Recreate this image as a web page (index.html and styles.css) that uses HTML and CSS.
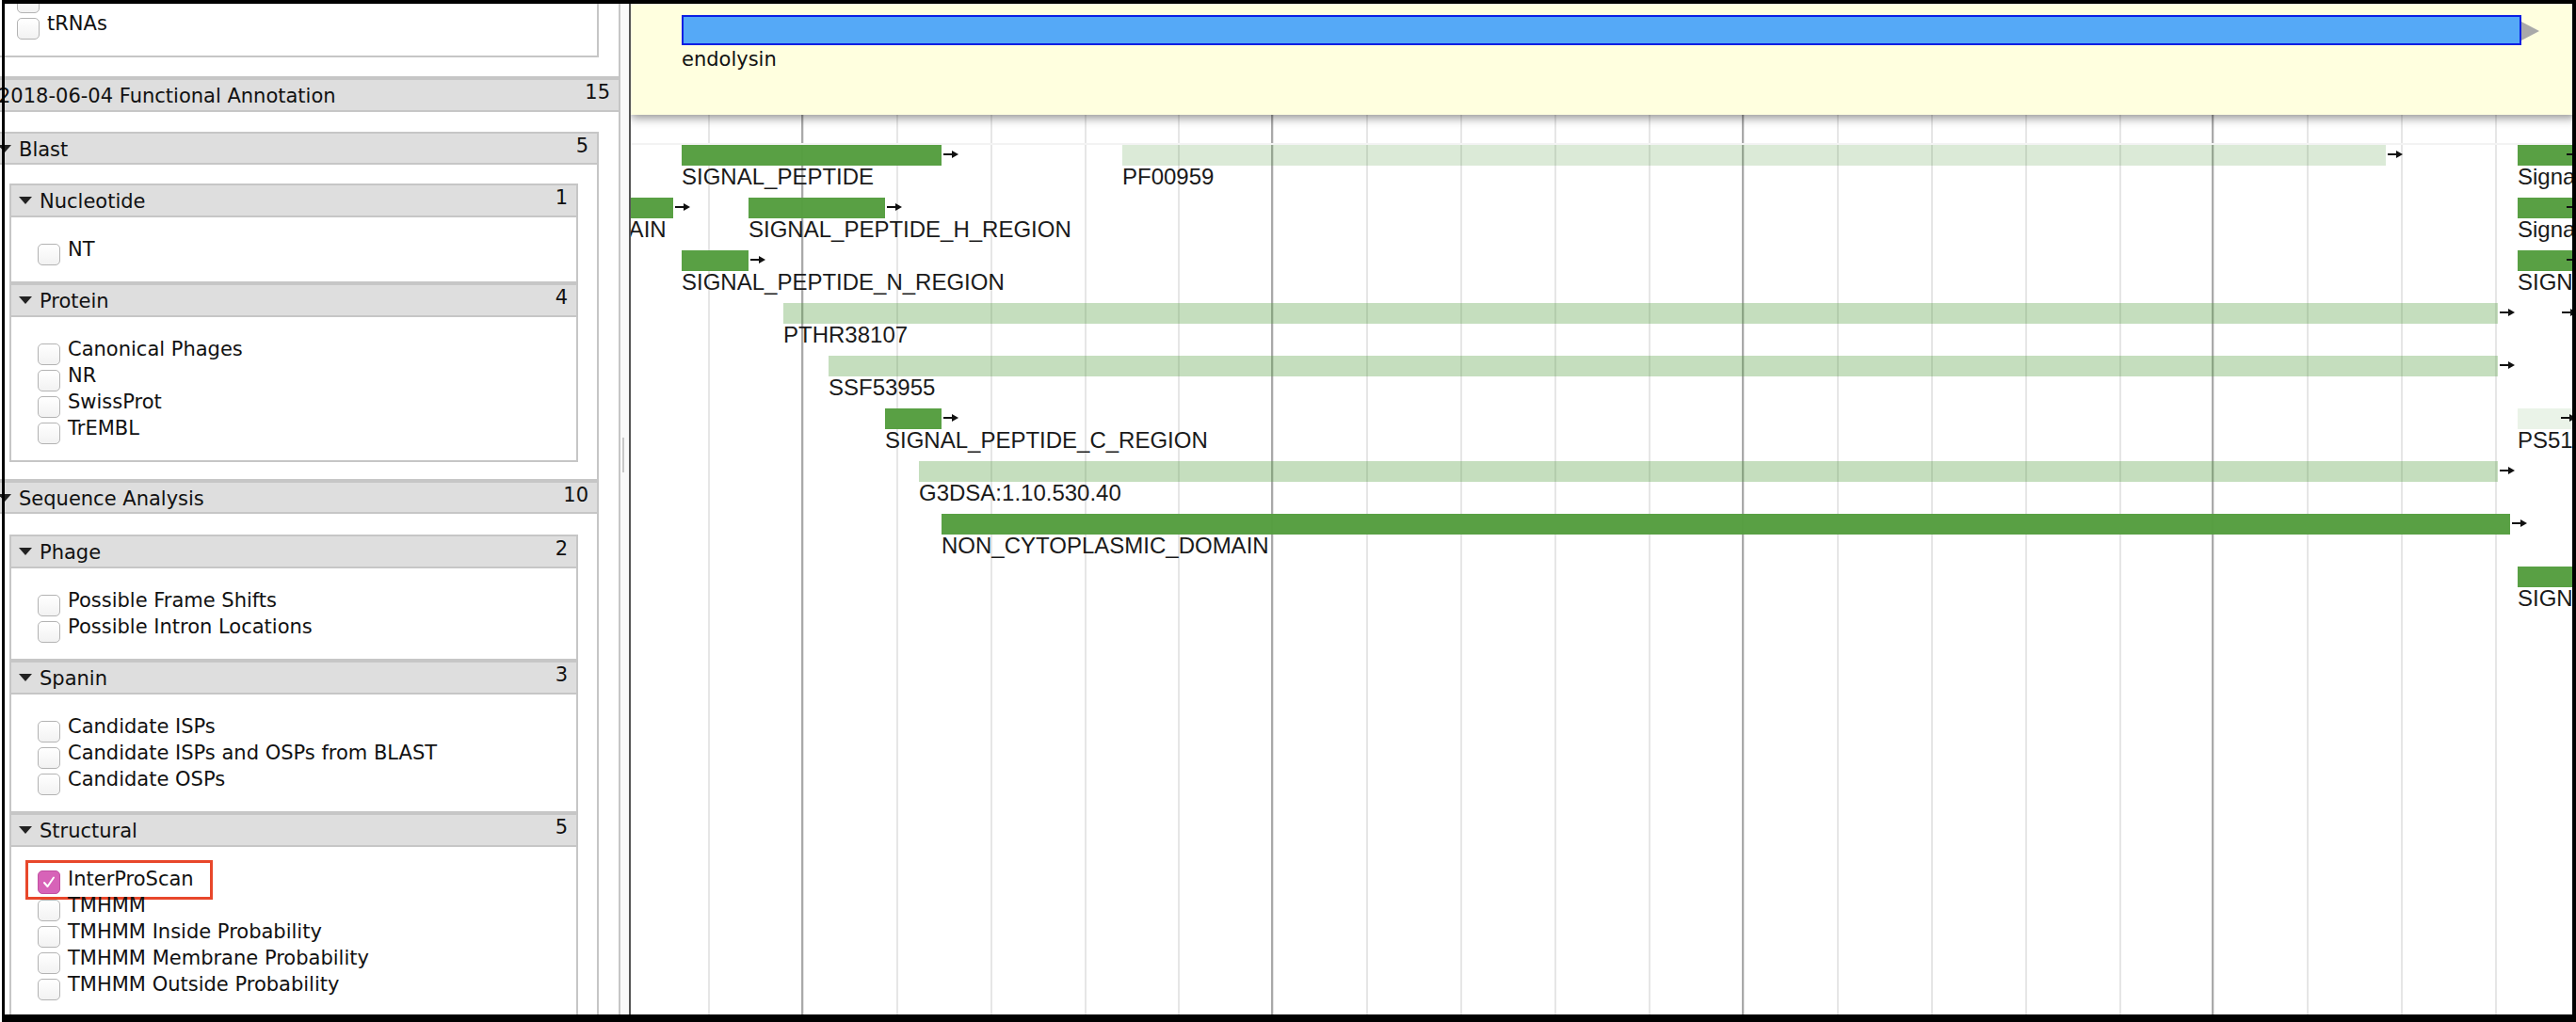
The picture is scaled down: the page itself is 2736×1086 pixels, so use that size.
FILE: index.html
```html
<!DOCTYPE html>
<html>
<head>
<meta charset="utf-8">
<title>JBrowse</title>
<link rel="stylesheet" href="styles.css">
</head>
<body>
<div class="app">
  <aside class="sidebar">
    <div class="scroll">
      <div class="section l0 cut">
        <div class="body b0 cut-body">
          <div class="section l1 cut">
            <div class="body list">
              <label class="item"><span class="cb"></span><span class="txt">Terminators</span></label>
              <label class="item"><span class="cb"></span><span class="txt">tRNAs</span></label>
            </div>
          </div>
        </div>
      </div>

      <div class="section l0">
        <div class="hdr"><span class="tri"></span><span class="title">2018-06-04 Functional Annotation</span><span class="count">15</span></div>
        <div class="body b0">
          <div class="section l1">
            <div class="hdr"><span class="tri"></span><span class="title">Blast</span><span class="count">5</span></div>
            <div class="body b1 first">
              <div class="section l2">
                <div class="hdr"><span class="tri"></span><span class="title">Nucleotide</span><span class="count">1</span></div>
                <div class="body list">
                  <label class="item"><span class="cb"></span><span class="txt">NT</span></label>
                </div>
              </div>
              <div class="section l2">
                <div class="hdr"><span class="tri"></span><span class="title">Protein</span><span class="count">4</span></div>
                <div class="body list">
                  <label class="item"><span class="cb"></span><span class="txt">Canonical Phages</span></label>
                  <label class="item"><span class="cb"></span><span class="txt">NR</span></label>
                  <label class="item"><span class="cb"></span><span class="txt">SwissProt</span></label>
                  <label class="item"><span class="cb"></span><span class="txt">TrEMBL</span></label>
                </div>
              </div>
            </div>
          </div>
          <div class="section l1">
            <div class="hdr"><span class="tri"></span><span class="title">Sequence Analysis</span><span class="count">10</span></div>
            <div class="body b1 second">
              <div class="section l2">
                <div class="hdr"><span class="tri"></span><span class="title">Phage</span><span class="count">2</span></div>
                <div class="body list">
                  <label class="item"><span class="cb"></span><span class="txt">Possible Frame Shifts</span></label>
                  <label class="item"><span class="cb"></span><span class="txt">Possible Intron Locations</span></label>
                </div>
              </div>
              <div class="section l2">
                <div class="hdr"><span class="tri"></span><span class="title">Spanin</span><span class="count">3</span></div>
                <div class="body list">
                  <label class="item"><span class="cb"></span><span class="txt">Candidate ISPs</span></label>
                  <label class="item"><span class="cb"></span><span class="txt">Candidate ISPs and OSPs from BLAST</span></label>
                  <label class="item"><span class="cb"></span><span class="txt">Candidate OSPs</span></label>
                </div>
              </div>
              <div class="section l2">
                <div class="hdr"><span class="tri"></span><span class="title">Structural</span><span class="count">5</span></div>
                <div class="body list">
                  <label class="item highlighted"><span class="cb checked"><svg viewBox="0 0 24 23" width="24" height="23"><path d="M7 12 L10.5 16 L17 6.5" fill="none" stroke="#fff" stroke-width="2" stroke-linecap="round" stroke-linejoin="round"/></svg></span><span class="txt">InterProScan</span><span class="hl-box"></span></label>
                  <label class="item"><span class="cb"></span><span class="txt">TMHMM</span></label>
                  <label class="item"><span class="cb"></span><span class="txt">TMHMM Inside Probability</span></label>
                  <label class="item"><span class="cb"></span><span class="txt">TMHMM Membrane Probability</span></label>
                  <label class="item"><span class="cb"></span><span class="txt">TMHMM Outside Probability</span></label>
                </div>
              </div>
            </div>
          </div>
        </div>
      </div>
    </div>
  </aside>

  <div class="splitter"><span class="handle"></span></div>

  <main class="tracks">
    <div class="pinned">
      <div class="gene-row">
        <div class="gene-bar"></div>
        <span class="gene-tip"></span>
      </div>
      <div class="gene-label">endolysin</div>
    </div>
    <div class="ruler-gap"></div>
    <div class="sep"></div>
    <div class="features">
      <!-- row 0 -->
      <div class="feat dark" style="top:0px;left:54px;width:276px"><span class="arrow"><svg viewBox="0 0 16 8" width="16" height="8"><path d="M0 4H11" stroke="#111" stroke-width="2"/><path d="M9 0L16 4L9 8Z" fill="#111"/></svg></span><span class="lbl">SIGNAL_PEPTIDE</span></div>
      <div class="feat pale" style="top:0px;left:522px;width:1342px"><span class="arrow"><svg viewBox="0 0 16 8" width="16" height="8"><path d="M0 4H11" stroke="#111" stroke-width="2"/><path d="M9 0L16 4L9 8Z" fill="#111"/></svg></span><span class="lbl">PF00959</span></div>
      <div class="feat dark" style="top:0px;left:2004px;width:140px"><span class="arrow inside" style="left:52px"><svg viewBox="0 0 16 8" width="16" height="8"><path d="M0 4H11" stroke="#111" stroke-width="2"/><path d="M9 0L16 4L9 8Z" fill="#111"/></svg></span><span class="lbl">SignalP-noTM</span></div>
      <!-- row 1 -->
      <div class="feat dark" style="top:56px;left:-310px;width:355px"><span class="arrow"><svg viewBox="0 0 16 8" width="16" height="8"><path d="M0 4H11" stroke="#111" stroke-width="2"/><path d="M9 0L16 4L9 8Z" fill="#111"/></svg></span><span class="lbl">NON_CYTOPLASMIC_DOMAIN</span></div>
      <div class="feat dark" style="top:56px;left:125px;width:145px"><span class="arrow"><svg viewBox="0 0 16 8" width="16" height="8"><path d="M0 4H11" stroke="#111" stroke-width="2"/><path d="M9 0L16 4L9 8Z" fill="#111"/></svg></span><span class="lbl">SIGNAL_PEPTIDE_H_REGION</span></div>
      <div class="feat dark" style="top:56px;left:2004px;width:140px"><span class="arrow inside" style="left:52px"><svg viewBox="0 0 16 8" width="16" height="8"><path d="M0 4H11" stroke="#111" stroke-width="2"/><path d="M9 0L16 4L9 8Z" fill="#111"/></svg></span><span class="lbl">SignalP-TM</span></div>
      <!-- row 2 -->
      <div class="feat dark" style="top:112px;left:54px;width:71px"><span class="arrow"><svg viewBox="0 0 16 8" width="16" height="8"><path d="M0 4H11" stroke="#111" stroke-width="2"/><path d="M9 0L16 4L9 8Z" fill="#111"/></svg></span><span class="lbl">SIGNAL_PEPTIDE_N_REGION</span></div>
      <div class="feat dark" style="top:112px;left:2004px;width:140px"><span class="arrow inside" style="left:52px"><svg viewBox="0 0 16 8" width="16" height="8"><path d="M0 4H11" stroke="#111" stroke-width="2"/><path d="M9 0L16 4L9 8Z" fill="#111"/></svg></span><span class="lbl">SIGNAL_PEPTIDE</span></div>
      <!-- row 3 -->
      <div class="feat light" style="top:168px;left:162px;width:1821px"><span class="arrow"><svg viewBox="0 0 16 8" width="16" height="8"><path d="M0 4H11" stroke="#111" stroke-width="2"/><path d="M9 0L16 4L9 8Z" fill="#111"/></svg></span><span class="lbl">PTHR38107</span></div>
      <div class="feat blank" style="top:168px;left:2048px;width:1px"><span class="arrow"><svg viewBox="0 0 16 8" width="16" height="8"><path d="M0 4H11" stroke="#111" stroke-width="2"/><path d="M9 0L16 4L9 8Z" fill="#111"/></svg></span></div>
      <!-- row 4 -->
      <div class="feat light" style="top:224px;left:210px;width:1773px"><span class="arrow"><svg viewBox="0 0 16 8" width="16" height="8"><path d="M0 4H11" stroke="#111" stroke-width="2"/><path d="M9 0L16 4L9 8Z" fill="#111"/></svg></span><span class="lbl">SSF53955</span></div>
      <!-- row 5 -->
      <div class="feat dark" style="top:280px;left:270px;width:60px"><span class="arrow"><svg viewBox="0 0 16 8" width="16" height="8"><path d="M0 4H11" stroke="#111" stroke-width="2"/><path d="M9 0L16 4L9 8Z" fill="#111"/></svg></span><span class="lbl">SIGNAL_PEPTIDE_C_REGION</span></div>
      <div class="feat faint" style="top:280px;left:2004px;width:140px"><span class="arrow inside" style="left:46px"><svg viewBox="0 0 16 8" width="16" height="8"><path d="M0 4H11" stroke="#111" stroke-width="2"/><path d="M9 0L16 4L9 8Z" fill="#111"/></svg></span><span class="lbl">PS51257</span></div>
      <!-- row 6 -->
      <div class="feat light" style="top:336px;left:306px;width:1677px"><span class="arrow"><svg viewBox="0 0 16 8" width="16" height="8"><path d="M0 4H11" stroke="#111" stroke-width="2"/><path d="M9 0L16 4L9 8Z" fill="#111"/></svg></span><span class="lbl">G3DSA:1.10.530.40</span></div>
      <!-- row 7 -->
      <div class="feat dark" style="top:392px;left:330px;width:1666px"><span class="arrow"><svg viewBox="0 0 16 8" width="16" height="8"><path d="M0 4H11" stroke="#111" stroke-width="2"/><path d="M9 0L16 4L9 8Z" fill="#111"/></svg></span><span class="lbl">NON_CYTOPLASMIC_DOMAIN</span></div>
      <!-- row 8 -->
      <div class="feat dark" style="top:448px;left:2004px;width:140px"><span class="lbl">SIGNAL_PEPTIDE</span></div>
    </div>
  </main>
</div>
<div class="frame"></div>
</body>
</html>
```

FILE: styles.css
```css
html, body {
  margin: 0;
  padding: 0;
  width: 2736px;
  height: 1086px;
  overflow: hidden;
  background: #ffffff;
}

.app {
  display: flex;
  width: 2736px;
  height: 1086px;
}

/* ---------- sidebar ---------- */
.sidebar {
  width: 659px;
  flex: 0 0 659px;
  height: 1086px;
  overflow: hidden;
  background: #ffffff;
  font-family: "DejaVu Sans", Verdana, sans-serif;
  font-size: 21px;
  color: #111111;
}

.scroll {
  margin-top: -37px;
  margin-left: -34px;
  width: 693px;
}

.section {
  border: 2px solid #c6c6c6;
  background: #ffffff;
}

.section.cut {
  border-top: none;
}

.hdr {
  display: flex;
  align-items: center;
  height: 31px;
  padding: 0 9px 0 8px;
  background: #dedede;
  border-bottom: 2px solid #c6c6c6;
}

.l0 > .hdr {
  height: 32px;
}

.l2 > .hdr {
  height: 32px;
}

.tri {
  width: 0;
  height: 0;
  border-left: 7px solid transparent;
  border-right: 7px solid transparent;
  border-top: 8px solid #222222;
  margin-right: 8px;
  flex: 0 0 auto;
}

.title {
  flex: 1;
  white-space: nowrap;
  line-height: 31px;
  padding-top: 3px;
}

.count {
  align-self: flex-start;
  line-height: 26px;
  white-space: nowrap;
}

.body.b0 {
  padding: 21px 21px 20px 20px;
}

.body.cut-body {
  padding-top: 0;
}

.body.b1 {
  padding: 20px;
}

.body.b1.first {
  padding-bottom: 18px;
}

.body.b1.second {
  padding-top: 22px;
}

.body.list {
  padding: 20px 20px 20px 28px;
}

.item {
  display: flex;
  align-items: flex-start;
  height: 28px;
  line-height: 28px;
  white-space: nowrap;
  position: relative;
}

.cb {
  box-sizing: border-box;
  width: 24px;
  height: 23px;
  margin-top: 8px;
  margin-right: 8px;
  border: 1.5px solid #b3b3b3;
  border-radius: 5px;
  background: linear-gradient(#ffffff, #f2f2f2);
  flex: 0 0 auto;
  position: relative;
  z-index: 1;
}

.cb.checked {
  background: #d763b8;
  border-color: #c24fa2;
  height: 25px;
  margin-top: 5px;
  overflow: hidden;
}

.cb.checked svg {
  display: block;
  margin: 0 0 0 -1.5px;
}

.txt {
  position: relative;
  z-index: 1;
}

.hl-box {
  position: absolute;
  left: -13px;
  top: -6px;
  width: 199px;
  height: 42px;
  box-sizing: border-box;
  border: 3px solid #e8472b;
}

/* ---------- splitter ---------- */
.splitter {
  width: 9px;
  flex: 0 0 9px;
  background: #fafafa;
  display: flex;
  flex-direction: column;
}

.handle {
  display: block;
  width: 2px;
  height: 37px;
  margin-top: 465px;
  margin-left: 2px;
  background: #c8c8c8;
}

/* ---------- tracks ---------- */
.tracks {
  flex: 1;
  height: 1086px;
  border-left: 2px solid #555555;
  overflow: hidden;
  display: flex;
  flex-direction: column;
  background-color: #ffffff;
  background-image:
    repeating-linear-gradient(90deg, transparent 0 181px, #a9a9a9 181px 183px, transparent 183px 499.5px),
    repeating-linear-gradient(90deg, transparent 0 82px, #e6e6e6 82px 84px, transparent 84px 99.9px);
}

.pinned {
  position: relative;
  z-index: 3;
  height: 122px;
  flex: 0 0 122px;
  background: #ffffdf;
  box-shadow: 0 3px 10px rgba(0, 0, 0, 0.45);
  font-family: "DejaVu Sans", Verdana, sans-serif;
  font-size: 21px;
  color: #111111;
}

.gene-row {
  display: flex;
  align-items: center;
  padding-top: 16px;
  padding-left: 54px;
}

.gene-bar {
  box-sizing: border-box;
  width: 1954px;
  height: 32px;
  background: #55a9f7;
  border: 2px solid #0b1fe4;
}

.gene-tip {
  width: 0;
  height: 0;
  border-top: 10px solid transparent;
  border-bottom: 10px solid transparent;
  border-left: 19px solid #a9a9a9;
  margin-top: 1px;
}

.gene-label {
  padding-left: 54px;
  line-height: 28px;
  padding-top: 1px;
}

.ruler-gap {
  height: 30px;
  flex: 0 0 30px;
}

.sep {
  height: 2px;
  flex: 0 0 2px;
  background: #f3f3f3;
}

.features {
  position: relative;
  flex: 1;
  font-family: "Liberation Sans", Arial, sans-serif;
  font-size: 24px;
  color: #1a1a1a;
}

.feat {
  position: absolute;
  height: 22px;
}

.feat.dark { background: rgba(86, 158, 64, 0.98); }
.feat.light { background: rgba(86, 158, 64, 0.34); }
.feat.pale { background: rgba(86, 158, 64, 0.21); }
.feat.faint { background: rgba(86, 158, 64, 0.12); }
.feat.blank { background: transparent; }

.arrow {
  position: absolute;
  left: calc(100% + 2px);
  top: 6px;
  width: 16px;
  height: 8px;
  line-height: 0;
}

.arrow svg {
  display: block;
}

.lbl {
  position: absolute;
  left: 0;
  top: 22px;
  line-height: 24px;
  white-space: nowrap;
}

/* ---------- screenshot frame ---------- */
.frame {
  position: fixed;
  top: 0;
  left: 2px;
  right: 0;
  bottom: 0;
  border-style: solid;
  border-color: #000000;
  border-width: 4px 4px 8px 3px;
  pointer-events: none;
  z-index: 10;
}
```
